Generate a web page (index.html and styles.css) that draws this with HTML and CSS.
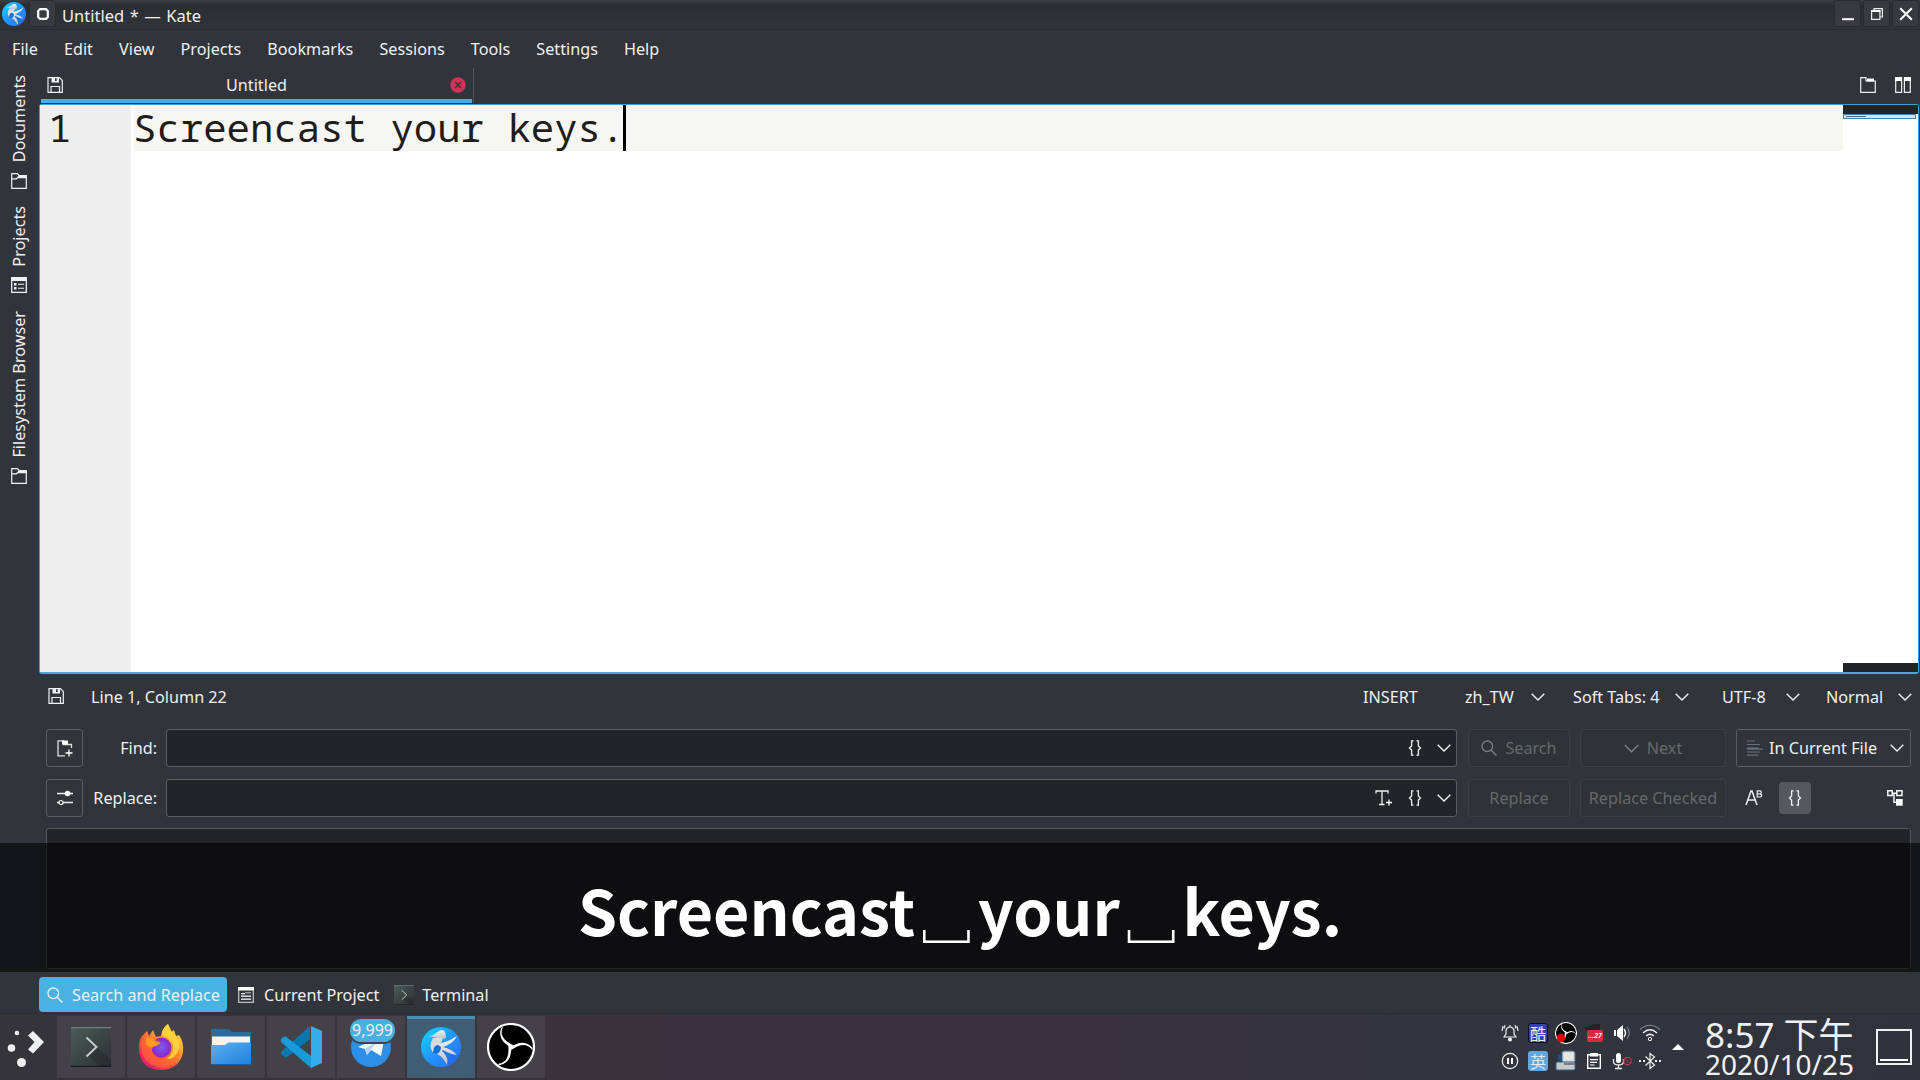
FILE: index.html
```html
<!DOCTYPE html>
<html lang="en">
<head>
<meta charset="utf-8">
<title>Untitled * — Kate</title>
<link rel="stylesheet" href="styles.css">
</head>
<body>
<svg class="defs" width="0" height="0">
  <defs>
    <linearGradient id="blue" x1="0" y1="0" x2="1" y2="1"><stop offset="0" stop-color="#0fdcff"/><stop offset=".5" stop-color="#2494ff"/><stop offset="1" stop-color="#2a6cf5"/></linearGradient>
    <linearGradient id="grey" x1="0" y1="0" x2="0" y2="1"><stop offset="0" stop-color="#f4f4f4"/><stop offset="1" stop-color="#bcc2c8"/></linearGradient>
    <linearGradient id="term" x1="0" y1="0" x2="1" y2="1"><stop offset="0" stop-color="#4d5a58"/><stop offset="1" stop-color="#2c3032"/></linearGradient>
    <linearGradient id="fox" x1="1" y1="0" x2=".2" y2="1"><stop offset="0" stop-color="#fff44f"/><stop offset=".4" stop-color="#ffa02e"/><stop offset=".7" stop-color="#ff4a3c"/><stop offset="1" stop-color="#e0107a"/></linearGradient>
    <radialGradient id="globe"><stop offset="0" stop-color="#7a5cf0"/><stop offset="1" stop-color="#8a26c8"/></radialGradient>
    <linearGradient id="fold" x1="0" y1="0" x2="1" y2="1"><stop offset="0" stop-color="#5cb0f0"/><stop offset="1" stop-color="#1f7fdc"/></linearGradient>
    <symbol id="kate" viewBox="0 0 40 40">
      <circle cx="20" cy="20" r="20" fill="url(#blue)"/>
      <path d="M25 19 38 28Q34 36 27 39L17 27Z" fill="#1d5fe0" opacity=".45"/>
      <circle cx="16" cy="21" r="6" fill="#1670dc"/>
      <path d="M7 9Q12 9 15 6 18 3 22 3 25 5 25 11L19 12Q14 10 7 9Z" fill="url(#grey)"/>
      <path d="M12 11Q7 19 12 26 12 18 20 16L22 11Z" fill="#d5dade"/>
      <path d="M12 17Q24 17 36 9 33 15 25 19L22 20Q31 22 36 28 28 27 22 23L21 24Q28 30 26 38 21 29 16 27 20 25 20 20 17 17 12 17Z" fill="url(#grey)"/>
    </symbol>
    <symbol id="obs" viewBox="0 0 48 48">
      <circle cx="24" cy="24" r="23" fill="#000" stroke="#fff" stroke-width="2.2"/>
      <g fill="#fff">
        <path id="blade" d="M14 5Q11 15 19 21L24 25 26 22Q17 18 15 12 14 8 16 4Z"/>
        <use href="#blade" transform="rotate(120 24 24)"/>
        <use href="#blade" transform="rotate(240 24 24)"/>
      </g>
    </symbol>
    <symbol id="floppy" viewBox="0 0 16 16"><path d="M1 .7H12.5L15.3 3.5V15.3H1Z M4 15V9.5H12.5V15" fill="none" stroke="currentColor" stroke-width="1.2"/><path d="M4.5 1V5.5H12V1H9.7V4H8V1Z" fill="currentColor"/></symbol>
    <symbol id="folder" viewBox="0 0 16 16"><path d="M.7 15.3V.7H6.5L8 2.5H15.3V15.3Z" fill="none" stroke="currentColor" stroke-width="1.2"/><path d="M8 2.2H15.6V5.2H7L5.500 6.500H1V5.300H5Z" fill="currentColor"/></symbol>
    <symbol id="list" viewBox="0 0 16 16"><path d="M.7.7H15.3V15.3H.7Z" fill="none" stroke="currentColor" stroke-width="1.3"/><path d="M1 1H15V4H1ZM3 6H5.5V8.5H3ZM3 10H5.5V12.5H3ZM7 6.7H13V7.8H7ZM7 10.7H13V11.8H7Z" fill="currentColor"/></symbol>
    <symbol id="chev" viewBox="0 0 14 8"><path d="M.7.7 7 7 13.3.7" fill="none" stroke="currentColor" stroke-width="1.4"/></symbol>
    <symbol id="brace" viewBox="0 0 14 16"><path d="M5.5.8H3.6V6L1.5 8 3.6 10V15.2H5.5M8.5.8H10.4V6L12.5 8 10.4 10V15.2H8.5" fill="none" stroke="currentColor" stroke-width="1.3"/></symbol>
    <symbol id="mag" viewBox="0 0 16 16"><circle cx="6.3" cy="6.3" r="5.3" fill="none" stroke="currentColor" stroke-width="1.3"/><path d="M10 10 15.4 15.4" stroke="currentColor" stroke-width="1.4"/></symbol>
    <symbol id="termicon" viewBox="0 0 40 40"><path d="M0 0H40V40H0Z" fill="url(#term)"/><path d="M0 0H40V1.2H0Z" fill="#718083"/><path d="M0 38.8H40V40H0Z" fill="#1a1d1f"/><path d="M26 20 40 33V39H30L16 29Z" fill="#222628" opacity=".4"/><path d="M15.5 10.5 25.5 20 15.5 29.5" fill="none" stroke="#c5cacc" stroke-width="2"/></symbol>
  </defs>
</svg>
<div class="screen">
  <header class="titlebar">
    <svg class="app" width="24" height="24"><use href="#kate"/></svg>
    <span class="wbtn pin"><svg width="12" height="12"><path d="M3 1.2H9L10.8 3V9L9 10.8H3L1.2 9V3Z" fill="none" stroke="#fff" stroke-width="2.2"/></svg></span>
    <span class="title">Untitled * — Kate</span>
    <span class="wbtns">
      <span class="wbtn"><svg width="14" height="14"><path d="M1 11.2H13V13.2H1Z" fill="#fff"/></svg></span>
      <span class="wbtn"><svg width="14" height="14"><path d="M1.6 4H9.9V12.4H1.6ZM4 4V1.6H12.4V10H10" fill="none" stroke="#eee" stroke-width="1.2"/><path d="M1 3H10.5V5H1Z" fill="#fff"/></svg></span>
      <span class="wbtn"><svg width="14" height="14"><path d="M1.2 1.2 12.8 12.8M12.8 1.2 1.2 12.8" stroke="#fff" stroke-width="2"/></svg></span>
    </span>
  </header>
  <nav class="menu"><span>File</span><span>Edit</span><span>View</span><span>Projects</span><span>Bookmarks</span><span>Sessions</span><span>Tools</span><span>Settings</span><span>Help</span></nav>
  <div class="main">
    <aside class="side">
      <span class="vtab docs"><b>Documents</b><svg width="16" height="16"><use href="#folder"/></svg></span>
      <span class="vtab proj"><b>Projects</b><svg width="16" height="16"><use href="#list"/></svg></span>
      <span class="vtab fs"><b>Filesystem Browser</b><svg width="16" height="16"><use href="#folder"/></svg></span>
    </aside>
    <section class="work">
      <div class="tabs">
        <div class="tab"><svg width="16" height="16"><use href="#floppy"/></svg><span>Untitled</span>
          <svg width="16" height="16"><circle cx="8" cy="8" r="7.7" fill="#cf3355"/><path d="M5 5 11 11M11 5 5 11" stroke="#31343b" stroke-width="1.3"/></svg></div>
        <div class="tools">
          <svg width="16" height="16"><path d="M.7 15.3V.7H6V4H15.3V15.3Z" fill="none" stroke="#eee" stroke-width="1.2"/><path d="M7 1.5H14V4.5H7Z" fill="#fff"/></svg>
          <svg width="16" height="16"><path d="M.7.7H6.6V15.3H.7ZM9.4.7H15.3V15.3H9.4Z" fill="none" stroke="#eee" stroke-width="1.2"/><path d="M0 0H7V4H0ZM9 0H16V4H9Z" fill="#fff"/></svg>
        </div>
      </div>
      <div class="editor">
        <div class="gutter">1</div>
        <div class="code"><div class="line"><span>Screencast your keys.</span><i class="caret"></i></div></div>
        <div class="minimap"><div class="mtop"></div><div class="mview"><i></i></div><div class="mbot"></div></div>
      </div>
      <div class="status">
        <svg width="16" height="16"><use href="#floppy"/></svg><span class="pos">Line 1, Column 22</span>
        <span class="ins">INSERT</span>
        <span class="st lang">zh_TW<svg width="14" height="8"><use href="#chev"/></svg></span>
        <span class="st soft">Soft Tabs: 4<svg width="14" height="8"><use href="#chev"/></svg></span>
        <span class="st enc">UTF-8<svg width="14" height="8"><use href="#chev"/></svg></span>
        <span class="st mode">Normal<svg width="14" height="8"><use href="#chev"/></svg></span>
      </div>
      <div class="search">
        <span class="sq"><svg width="16" height="17"><path d="M14.5 8V4.5H6.5V.8H1V15.8H8" fill="none" stroke="#ddd" stroke-width="1.3"/><path d="M5 .5H11V4.5H5Z" fill="#fff"/><path d="M12 9.5V16.5M8.5 13H15.5" stroke="#fff" stroke-width="1.3"/></svg></span>
        <label>Find:</label>
        <span class="field"><svg width="14" height="16"><use href="#brace"/></svg><svg width="14" height="8"><use href="#chev"/></svg></span>
        <span class="btn"><svg width="16" height="16"><use href="#mag"/></svg>Search</span>
        <span class="btn"><svg width="15" height="9"><use href="#chev"/></svg>Next</span>
        <span class="combo"><svg width="16" height="16"><path d="M0 1H8M0 4.5H13M0 8H11M0 9.200H16M0 12H13M0 15.2H11" stroke="#687079" stroke-width="1.2"/></svg>In Current File<svg class="end" width="14" height="8"><use href="#chev"/></svg></span>
        <span class="sq"><svg width="16" height="16"><path d="M0 3.5H16M6 12.5H16M0 12.5H2" stroke="#eee" stroke-width="1.3"/><circle cx="10.5" cy="3.5" r="2.8" fill="#fff"/><circle cx="4" cy="12.5" r="2" fill="none" stroke="#fff" stroke-width="1.2"/></svg></span>
        <label>Replace:</label>
        <span class="field"><svg width="18" height="16"><path d="M1 3.5V1H13V3.5M7 1V14.5M4 14.5H9.5" fill="none" stroke="#eee" stroke-width="1.3"/><path d="M14 9.5V15.5M11 12.5H17" stroke="#fff" stroke-width="1.3"/></svg><svg width="14" height="16"><use href="#brace"/></svg><svg width="14" height="8"><use href="#chev"/></svg></span>
        <span class="btn">Replace</span>
        <span class="btn">Replace Checked</span>
        <span class="opts">
          <svg width="18" height="16"><path d="M1 15 6 1H7L12 15M3 10H10.5" fill="none" stroke="#eee" stroke-width="1.5"/><path d="M12.2.8H15Q16.5 1 16.2 3 16 3.8 14.5 3.9 17 4 16.6 6 16.2 7 15 7H12.2ZM12.2 3.9H15" fill="none" stroke="#eee" stroke-width="1.2"/></svg>
          <span class="on"><svg width="14" height="16"><use href="#brace"/></svg></span>
          <svg class="tree" width="16" height="16"><path d="M.8.8H5.2V5.5H.8ZM9.8.8H15V5.5H9.8ZM5 3.2H10M7 3.2V12.2H10" fill="none" stroke="#fff" stroke-width="1.4"/><path d="M9 9H15.7V15.7H9Z" fill="#fff"/></svg>
        </span>
      </div>
      <div class="results"></div>
      <div class="panels">
        <span class="panel active"><svg width="16" height="16"><use href="#mag"/></svg>Search and Replace</span>
        <span class="panel"><svg width="16" height="16"><path d="M.7.7H15.3V15.3H.7Z" fill="none" stroke="#bbb" stroke-width="1.3"/><path d="M0 0H16V3.5H0ZM3 6H7V7.2H3ZM3 8.5H13V9.7H3ZM3 11.5H13V12.7H3ZM7 5.5H13V6.3H7Z" fill="#fff"/></svg>Current Project</span>
        <span class="panel"><svg width="20" height="20"><use href="#termicon"/></svg>Terminal</span>
      </div>
    </section>
  </div>
  <footer class="taskbar">
    <svg class="launcher" width="57" height="66" viewBox="0 0 57 66"><g fill="#eff0f1"><circle cx="17" cy="17" r="2.3"/><circle cx="11.5" cy="32" r="3.8"/><circle cx="21.5" cy="46.5" r="4.5"/><path d="M28 19.5 33 15 44 26 33 37.5 28 33.5 34.5 26Z"/></g></svg>
    <span class="task"><svg width="40" height="40"><use href="#termicon"/></svg></span>
    <span class="task"><svg width="46" height="48" viewBox="0 0 46 48"><path d="M4 13 9 8 11 13 15 7 18 14 23 13Q24 5 30 1L33 9 36 7 38 13 41 12Q46 19 45 29C43 41 34 47 23 47S2 41 1 28Q0 18 4 13Z" fill="url(#fox)"/><circle cx="23.5" cy="24.5" r="10" fill="url(#globe)"/><path d="M6 14Q14 13 18 17L22 18 20 21Q16 23 14 26 13 32 20 35 30 37 34 29 36 21 31 15 41 18 42 30 39 43 24 45 8 43 4 30 2 20 6 14Z" fill="#ff7a2a" opacity=".5"/><path d="M8 15Q14 14 17 18L23 20 18 23Q14 23 14 25L8 22Z" fill="#ff9c20"/><path d="M24 12Q24 5 30 1L34 9Q43 17 41 27 36 37 29 36 38 28 34 19 30 14 24 12Z" fill="#ffd83e" opacity=".85"/></svg></span>
    <span class="task"><svg width="40" height="38" viewBox="0 0 40 38"><path d="M0 1H18L21 4H40V18H0Z" fill="#286c9c"/><path d="M1 8.5H39V18H1Z" fill="#f5f5f6"/><path d="M0 17H14L17 14.5H40V37H0Z" fill="url(#fold)"/><path d="M0 36H40V37H0Z" fill="#1b5d9d"/></svg></span>
    <span class="task"><svg width="42" height="42" viewBox="0 0 42 42"><path d="M1 26 30 0V13L6 32 1 28Z" fill="#0878b4"/><path d="M1 13 5 10 31 30V42L1 16Z" fill="#179bdb"/><path d="M31 0 42 5V37L31 42Z" fill="#34adeb"/></svg></span>
    <span class="task"><svg width="40" height="40" viewBox="0 0 40 40"><circle cx="20" cy="20" r="20" fill="#2c8fe8"/><path d="M7 20 34 8 30 29 20 23 16 28 14 22Z" fill="#f6f8fb"/><path d="M14 22 28 13 19 23 16 28Z" fill="#b9d2eb"/></svg><em class="badge">9,999</em></span>
    <span class="task current"><svg width="40" height="40"><use href="#kate"/></svg></span>
    <span class="task"><svg width="48" height="48"><use href="#obs"/></svg></span>
    <div class="tray">
      <svg width="18" height="18" viewBox="0 0 18 18"><path d="M3 13H15L13 10V6Q12 3 9 3 6 3 5 6V10ZM2 2 1 7M4 1.2 3 4.5M16 2 17 7M14 1.2 15 4.5M9 1V3" fill="none" stroke="#eee" stroke-width="1.2"/><circle cx="9" cy="15.5" r="2" fill="#fff"/></svg>
      <span class="cjk ku">酷</span>
      <svg width="22" height="22" viewBox="0 0 22 22"><g transform="scale(.458)"><use href="#obs" width="48" height="48"/></g><circle cx="6" cy="16" r="4.2" fill="#e00008"/></svg>
      <span class="cal"><i>...27</i></span>
      <svg width="18" height="18" viewBox="0 0 18 18"><path d="M1 6H3V12H1ZM4 6 10 1V17L4 12Z" fill="#fff"/><path d="M11 5Q14 9 11 13" fill="none" stroke="#eee" stroke-width="1.5"/><path d="M14 3Q18.500 9 14 15" fill="none" stroke="#82868b" stroke-width="1.2"/></svg>
      <svg width="22" height="18" viewBox="0 0 22 18"><path d="M1 5.500Q11-3 21 5.500" fill="none" stroke="#82868b" stroke-width="1.2"/><path d="M4 9Q11 2.500 18 9M7 12Q11 8.500 15 12" fill="none" stroke="#eee" stroke-width="1.3"/><circle cx="11" cy="15" r="1.700" fill="none" stroke="#fff"/></svg>
      <svg width="18" height="18" viewBox="0 0 18 18"><circle cx="9" cy="9" r="7.700" fill="none" stroke="#eee" stroke-width="1.2"/><path d="M6 6H8V12H6ZM10 6H12V12H10Z" fill="#fff"/></svg>
      <span class="cjk ying">英</span>
      <svg width="22" height="22" viewBox="0 0 22 22"><rect x="7" y="1" width="13" height="12" rx="2" fill="#d9d9d4" stroke="#3b6ba0"/><rect x="1" y="12" width="19" height="8" rx="1.500" fill="#c9cac6" stroke="#315f92"/><path d="M3 5H7V12H3Z" fill="#274c7a"/><path d="M9 3H18V10H9Z" fill="#e8e8e2"/><path d="M9 13H20V15H9Z" fill="#777f86"/></svg>
      <svg width="16" height="18" viewBox="0 0 16 18"><path d="M1.700 2.700H14.300V16.300H1.700Z" fill="none" stroke="#fff" stroke-width="1.400"/><path d="M4 1H12V4.500H4ZM4 7H12V8.200H4ZM4 9.700H11V10.900H4ZM4 12.400H8.500V13.600H4Z" fill="#fff"/></svg>
      <svg width="20" height="18" viewBox="0 0 20 18"><rect x="4" y="1" width="5" height="10" rx="2.500" fill="#fff"/><path d="M1.500 7V10Q2 13 6.500 13 11 13 11.500 10V7M6.500 13V16M3 16.500H10" fill="none" stroke="#eee" stroke-width="1.300"/><circle cx="15.500" cy="9" r="3.700" fill="none" stroke="#c33852" stroke-width="1.200"/><path d="M13 6.500 18 11.500" stroke="#c33852"/></svg>
      <svg width="22" height="18" viewBox="0 0 22 18"><path d="M6.500 4.500 15.500 13 11 16.500V1.500L15.500 5 6.500 13.500" fill="none" stroke="#eee" stroke-width="1.200"/><path d="M0 8H2V10H0ZM4 8H6V10H4ZM16 8H18V10H16ZM20 8H22V10H20Z" fill="#eee"/></svg>
    </div>
    <svg class="more" width="12" height="6"><path d="M0 6 6 0 12 6Z" fill="#fff"/></svg>
    <div class="clock"><span class="time">8:57 下午</span><span class="date">2020/10/25</span></div>
    <svg class="desk" width="36" height="36"><path d="M1 1H35V35H1Z" fill="none" stroke="#eff0f1" stroke-width="2"/><path d="M4 30H32V32H4Z" fill="#fff"/></svg>
  </footer>
  <div class="keys"><span>Screencast<i>␣</i>your<i>␣</i>keys.</span></div>
</div>
</body>
</html>
```
FILE: styles.css
```css
* { box-sizing: border-box; }
body { margin: 0; background: #31343b; color: #eff0f1; font: 16.2px/22px "Noto Sans", "Noto Sans CJK TC", sans-serif; overflow: hidden; white-space: nowrap; }
svg { display: block; flex: none; color: #eff0f1; }
i, em { font-style: normal; }
.defs { position: absolute; }
.screen { position: relative; width: 1920px; height: 1080px; display: flex; flex-direction: column; }

.titlebar { height: 30px; display: flex; align-items: flex-start; padding: 0 1px 0 2px; background: linear-gradient(#3b3f44 0, #2b2e31 5px, #303438 29px); border-bottom: 1px solid #2a2d31; }
.app { margin-top: 2px; }
.wbtn { width: 27px; height: 27px; display: flex; align-items: center; justify-content: center; background: #373b41; border: 1px solid #292c30; border-radius: 3px; }
.pin { margin-left: 3px; }
.title { margin: 5px 0 0 6px; font-size: 16.500px; word-spacing: 1.200px; }
.wbtns { margin-left: auto; display: flex; gap: 2px; }
.menu { height: 38px; display: flex; align-items: center; gap: 26.100px; padding-left: 12px; }

.main { display: flex; height: 945px; }
.side { width: 39px; padding-right: 2px; }
.vtab { display: flex; flex-direction: column; align-items: center; justify-content: space-between; }
.vtab b { writing-mode: vertical-rl; transform: rotate(180deg); font-weight: 400; }
.docs { margin-top: 7px; height: 114px; }
.proj { margin-top: 17px; height: 87px; }
.fs { margin-top: 18px; height: 173px; }
.work { flex: 1; display: flex; flex-direction: column; }

.tabs { height: 36px; display: flex; justify-content: space-between; padding-left: 2px; }
.tab { width: 433px; height: 35px; display: flex; align-items: center; justify-content: space-between; padding: 0 7px 1px 6px; background: linear-gradient(#4aaede, #4aaede) 0 31px / 431px 4px no-repeat; border-right: 1px solid #55585e; }
.tools { display: flex; gap: 19px; padding: 9px 9px 0 0; }

.editor { height: 570px; display: flex; background: #fff; border: 1px solid #3f9fce; border-bottom: 2px solid #48a9d8; border-radius: 3px; margin-right: 1px; color: #1f1c1b; font: 39px/46px "Noto Sans Mono", "DejaVu Sans Mono", monospace; }
.gutter { width: 91px; padding-left: 8px; background: #eee; line-height: 43px; }
.code { flex: 1; padding-left: 3px; }
.line { height: 46px; display: flex; background: #f6f6f2; line-height: 43px; }
.line span { width: 489px; margin-left: -1px; margin-right: 1px; }
.caret { width: 3px; background: #000; }
.minimap { width: 75px; display: flex; flex-direction: column; }
.mtop, .mbot { height: 9px; background: #232428; }
.mbot { margin-top: auto; }
.mview { height: 5px; width: 73px; border: 1px solid #4a83ad; background: #c9e5f3; }
.mview i { display: block; width: 20px; height: 1px; margin: 1px 0 0 2px; background: #536b78; }

.status { height: 55px; display: flex; align-items: flex-start; padding: 12px 9px; }
.pos { margin-left: 27px; }
.status > svg { margin-top: 2px; }
.ins { margin-left: auto; width: 102px; }
.st { display: flex; align-items: center; justify-content: space-between; }
.lang { width: 80px; margin-right: 28px; }
.soft { width: 116px; margin-right: 33px; }
.enc { width: 78px; margin-right: 26px; }
.mode { width: 86px; margin-right: -1px; }

.search { display: grid; grid-template-columns: 37px 83px 1291px 11px 102px 10px 146px 10px 175px; grid-template-rows: 38px 38px; row-gap: 12px; padding-left: 7px; align-items: stretch; }
.sq, .field, .btn, .combo { display: flex; align-items: center; border: 1px solid #5b5e63; border-radius: 3px; }
.sq { justify-content: center; grid-column: 1; }
label { text-align: right; padding: 8px 9px 0 0; }
.field { background: #232428; justify-content: flex-end; padding-right: 5px; gap: 15px; }
.btn { grid-column: 5; justify-content: center; gap: 8px; color: #65696e; border-color: #3b3e43; background: #2f3236; }
.btn + .btn { grid-column: 7; }
.btn svg { color: #7b7f84; }
.combo, .opts { grid-column: 9; }
.combo { padding: 0 6px 0 10px; gap: 6px; }
.end { margin-left: auto; }
.opts { display: flex; align-items: center; padding: 0 8px 0 9px; }
.on { width: 32px; height: 32px; margin-left: 16px; border-radius: 4px; background: #55585c; display: flex; align-items: center; justify-content: center; }
.tree { margin-left: auto; }
.results { height: 141px; margin: 11px 9px 0 8px; margin-left: 7px; border: 1px solid #55585d; border-radius: 3px; background: #232428; }
.panels { display: flex; align-items: center; height: 35px; margin-top: 8px; gap: 11px; }
.panel { display: flex; align-items: center; gap: 10px; }
.active { height: 35px; width: 188px; padding-left: 8px; gap: 9px; background: #48b3e2; border-radius: 4px; }
.panel + .panel + .panel { margin-left: 4px; gap: 8px; }

.taskbar { height: 67px; display: flex; padding-top: 2px; background: linear-gradient(90deg, #353439, #37343b 18%, #3a313d 32%, #37323e 58%, #32343e 78%, #30333c); border-top: 1px solid #2b2e33; }
.task { position: relative; width: 68px; height: 62px; margin-right: 2px; background: #444148; display: flex; align-items: center; justify-content: center; }
.current { background: #405d73; border-top: 3px solid #4590ba; padding-bottom: 3px; }
.badge { position: absolute; left: 13px; top: 3px; width: 45px; height: 23px; border-radius: 12px; background: #48b0df; box-shadow: 0 0 0 2px #444148; font-size: 16px; line-height: 22px; text-align: center; }
.tray { display: grid; grid-template-columns: repeat(6, 28px); grid-template-rows: 28px 28px; place-items: center; margin: 3px 0 0 auto; width: 168px; }
.cjk { width: 20px; height: 20px; font: 16px/20px "Noto Sans CJK TC", sans-serif; text-align: center; border-radius: 3px; }
.ku { background: #353fb6; border: 1px solid #090b28; line-height: 18px; }
.ying { background: #62a6dc; color: #d9effb; }
.cal { width: 18px; height: 18px; padding-top: 6px; background: linear-gradient(160deg, transparent 30%, #242529 31%) 0 0 / 15px 6px no-repeat; }
.cal i { display: block; width: 16px; height: 12px; margin-left: 2px; background: #d82c3c; border-radius: 2px; font: bold italic 7px/12px "Noto Sans", sans-serif; text-align: center; }
.more { margin: 28px 21px 0 8px; }
.clock { width: 150px; display: flex; flex-direction: column; }
.time { font-size: 35px; line-height: 37px; }
.date { font-size: 28px; line-height: 22px; }
.desk { margin: 13px 8px 0 21px; }

.keys { position: absolute; left: 0; top: 843px; width: 1920px; height: 129px; background: rgba(0, 0, 0, .59); color: #fff; font: bold 62.700px/131px "Noto Sans CJK TC", sans-serif; text-align: center; }
.keys i { font-weight: 400; }
```
